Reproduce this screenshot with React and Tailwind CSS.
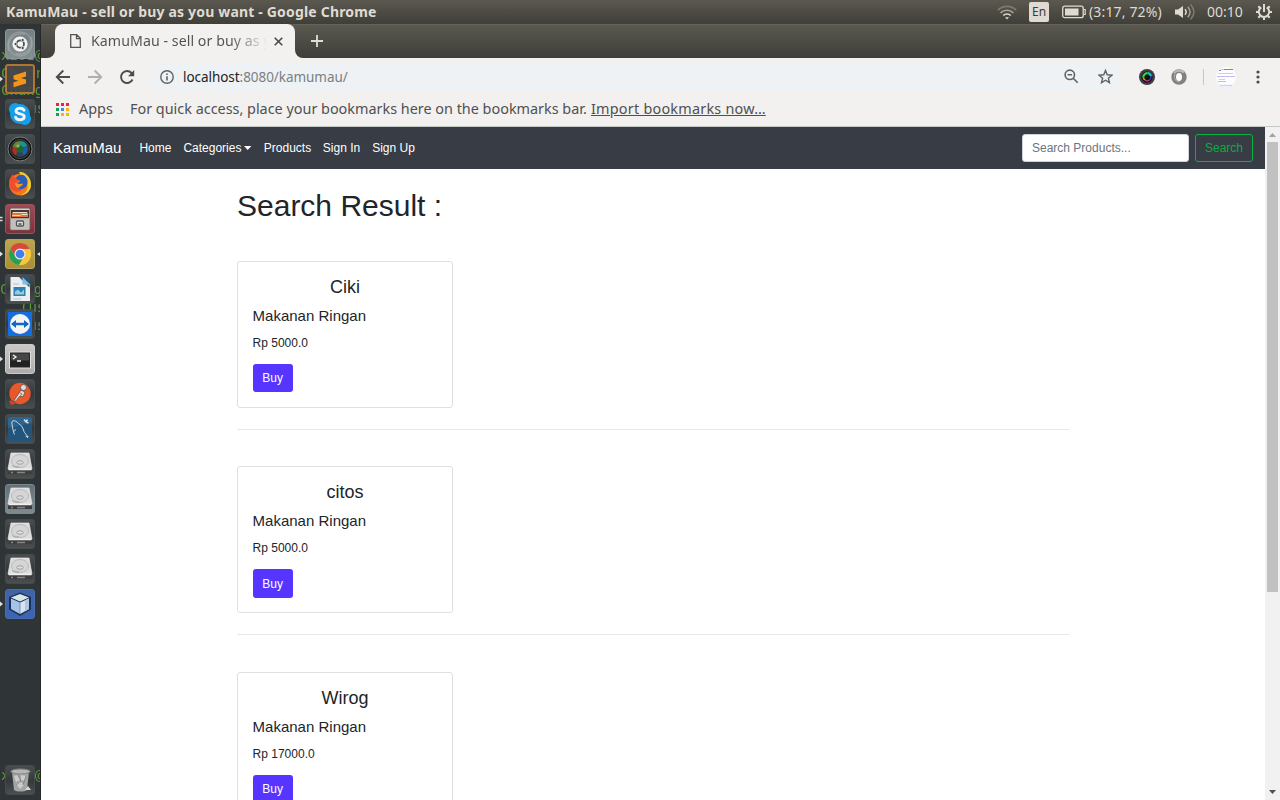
import React from "react";

const GHOST_LINES = [
  { y: 22, x: 1, t: "x201@" },
  { y: 40, x: 1, t: "Chror" },
  { y: 57, x: 1, t: "Chang" },
  { y: 75, x: 20, t: "Cus" },
  { y: 256, x: 0, t: "Chang" },
  { y: 274, x: 20, t: "(us" },
  { y: 292, x: 20, t: "Cus" },
  { y: 742, x: 1, t: "x201@" },
];

const S = ({ children }) => (
  <svg width="30" height="30" viewBox="0 0 30 30" className="block shrink-0">
    {children}
  </svg>
);

const Dash = () => (
  <S>
    <circle cx="15" cy="15" r="12" fill="none" stroke="#a9b3b6" strokeWidth="1.5" opacity=".5" />
    <path d="M4 22C1 10 10 3 20 5M26 8c3 11-5 19-15 17" stroke="#b8c1c3" strokeWidth="2" fill="none" opacity=".4" />
    <circle cx="15" cy="15" r="7.6" fill="#fff" />
    <circle cx="15.3" cy="15" r="3.7" fill="none" stroke="#474b4c" strokeWidth="1.7" />
    <g fill="#474b4c" stroke="#fff" strokeWidth=".8">
      <circle cx="10.6" cy="15" r="1.6" />
      <circle cx="17.7" cy="11" r="1.6" />
      <circle cx="17.7" cy="19" r="1.6" />
    </g>
  </S>
);
const Sublime = () => (
  <S>
    <rect x="1" y="1" width="28" height="28" rx="2" fill="#484848" stroke="#b97932" strokeWidth="2" />
    <path d="M8.500 11.500 21 7.500V12.500l-5 1.500 5 1.500v4L8.500 23.200v-5l5-1.500-5-1.500z" fill="#ff9a18" />
  </S>
);
const Skype = () => (
  <S>
    <g fill="#12a5f4">
      <circle cx="15" cy="15" r="10" />
      <circle cx="10.200" cy="10.200" r="6.2" />
      <circle cx="19.800" cy="19.800" r="6.2" />
    </g>
    <path d="M19 11.2c-1-1.8-2.4-2-4-2-2.200 0-4 1-4 2.800 0 4 8.200 1.700 8.200 5.600 0 2-1.800 3.200-4.200 3.200-2 0-3.700-.8-4.400-2.600" fill="none" stroke="#fff" strokeWidth="2.9" strokeLinecap="round" />
  </S>
);
const Lens = () => (
  <S>
    <circle cx="15" cy="15" r="12" fill="#111" stroke="#808080" strokeWidth="1" />
    <circle cx="15" cy="15" r="9.5" fill="#222" stroke="#4a4a4a" />
    <path d="M15 15V7a8 8 0 0 0-7.500 6z" fill="#6e8b30" />
    <path d="M15 15V7a8 8 0 0 1 7.500 5z" fill="#1b9a8e" />
    <path d="M15 15l7.500-3a8 8 0 0 1-4 10z" fill="#235fb0" />
    <path d="M15 15l3.500 7a8 8 0 0 1-8-.5z" fill="#254a55" />
    <path d="M15 15l-4.500 6.500a8 8 0 0 1-3-8.500z" fill="#b52d25" />
    <circle cx="15" cy="15" r="3.600" fill="#1d6a38" />
    <circle cx="13" cy="12" r="1.500" fill="#b7d6a0" opacity=".7" />
  </S>
);
const Firefox = () => (
  <S>
    <circle cx="15" cy="15.500" r="10.800" fill="#ff7b1c" />
    <path d="M14 3c7-1 13 7 12 14-1 6-6 9.500-11 9.500 6-2 9-7 7-12-1-4-5-5-8-11.500z" fill="#ffd12e" />
    <path d="M4 15c0-5 2-8 4-10l1 4c3-1 5 0 6 1l-4 4c-1 4 3 6 7 4-1 4-5 6-9 4-3-1-5-4-5-7z" fill="#f8502c" />
    <path d="M11 9c3-5 9-4 11 1 2 5-1 10-6 10-4 0-5-3-4-6l4-2c-2 0-3-1-5-3z" fill="#2c5fbd" />
    <path d="M10 14c2 0 3 1 5 1 2-.5 3-1 3 0-1 2-3 2-4 4-2 0-4-2-4-5z" fill="#ff9a20" />
  </S>
);
const Files = () => (
  <S>
    <rect x="5" y="4" width="20" height="22" rx="1.500" fill="#ddd9d2" stroke="#6e5d5a" />
    <rect x="6" y="6" width="18" height="8.500" fill="#4b3830" />
    <rect x="7" y="8.500" width="16" height="4.500" fill="#e8783a" />
    <path d="M8 8.500h14M7.500 11.500h8l1-1h6" stroke="#f6e6d4" />
    <path d="M6 14.500h18v11H6z" fill="#c9c8c4" />
    <rect x="11.500" y="17" width="7" height="5" rx="1" fill="#eee" stroke="#555" strokeWidth="1.300" />
    <path d="M13.500 20h3" stroke="#444" strokeWidth="1.500" />
  </S>
);
const Chrome = () => (
  <S>
    <circle cx="15" cy="15" r="11" fill="#ffcf3f" />
    <path d="M5.500 9.500A11 11 0 0 1 24.800 10H15l-4.300 7.500z" fill="#df4a3b" />
    <path d="M5.500 9.500A11 11 0 0 0 14 26l5.300-8.500h-8.600z" fill="#28a55b" />
    <path d="M24.800 10A11 11 0 0 1 14 26l5.300-8.500L20 12l-5-2z" fill="#ffcf3f" />
    <circle cx="15" cy="15" r="5.500" fill="#f3f3f3" />
    <circle cx="15" cy="15" r="4.300" fill="#4285f4" />
  </S>
);
const Writer = () => (
  <S>
    <path d="M5.500 3h12l7.500 7.500V27H5.500z" fill="#f5f8fa" />
    <path d="M14 3h10.500v10.500z" fill="#1e5b85" />
    <path d="M17.500 3v7.500H25z" fill="#8fc3e6" />
    <path d="M8 10h6M8 25h8" stroke="#b4cddd" />
    <rect x="8.500" y="13" width="12" height="9" fill="#2a86bb" />
    <path d="M10 20.500v-3l3-2 3 3 3-3v5z" fill="#9cd1e8" />
  </S>
);
const TeamViewer = () => (
  <S>
    <rect x="3" y="3" width="24" height="24" fill="#1471e8" />
    <circle cx="15" cy="15" r="10" fill="#fff" />
    <path d="M6 15l5-4v2.700h8V11l5 4-5 4v-2.700h-8V19z" fill="#126bce" />
  </S>
);
const Terminal = () => (
  <S>
    <rect x="4.500" y="8" width="21" height="16" fill="#222" stroke="#eceae7" />
    <rect x="6" y="9.500" width="18" height="7" fill="#484848" />
    <path d="M8 11l3 2-3 2M12 17h4" stroke="#fff" strokeWidth="1.300" fill="none" />
  </S>
);
const Postman = () => (
  <S>
    <circle cx="15" cy="14.500" r="10.700" fill="#f3592a" />
    <path d="M4 22l5-1 1 4-4 1z" fill="#dd4820" />
    <circle cx="18.500" cy="8.500" r="3" fill="#e8e7e4" stroke="#5a5450" strokeWidth=".8" />
    <path d="M16 11l4 2-2 5-3-1-4 5-3 1 4-6z" fill="#e6e2dc" stroke="#60524c" strokeWidth=".8" />
    <path d="M15 14l2 1-6 7" stroke="#f3592a" fill="none" />
  </S>
);
const Mysql = () => (
  <S>
    <rect x="3" y="3" width="24" height="24" rx="2" fill="#2f6794" />
    <path d="M3 14l24-5v18H3z" fill="#235680" />
    <path
      d="M9.500 20.500c-1-2-1.500-5-2-7.500C7 10 6 7.500 8 6.800c2-.5 4 1 5.500 2.700 3 1.500 4.500 4.500 5.500 8 .5 1.500 2.500 3 4 5.500l-2.500-1M8.500 17.500l2.500-2M22.500 24l.5-2"
      fill="none"
      stroke="#d5e1e9"
    />
    <path d="M19 5.500l2 2.500 2.500 1M21 8l1.500-2.500" stroke="#e0e6e9" strokeWidth="1.500" fill="none" />
  </S>
);
const Drive = () => (
  <S>
    <path d="M3 19h24v6H3z" fill="#3f3f3f" />
    <path d="M6 4h18l3 16H3z" fill="#e6e6e6" stroke="#f1f1f1" strokeWidth=".7" />
    <ellipse cx="15" cy="12" rx="8.500" ry="6.500" fill="#dedede" stroke="#c2c2c2" />
    <ellipse cx="15" cy="13.500" rx="3.300" ry="1.700" fill="#e9e9e9" stroke="#a5a5a5" />
    <path d="M7 16c1 2 4 2.500 7 1.800" stroke="#a5a5a5" fill="none" />
    <path d="M3.500 20.500h23" stroke="#fafafa" strokeWidth="1.500" />
    <path d="M6 23.500h2M12 23.500h8" stroke="#8a8a8a" strokeWidth="1.500" />
  </S>
);
const Box = () => (
  <S>
    <path d="M15 3.500 26 8v12.500L15 27 4 20.500V8z" fill="#1c3158" />
    <path d="M15 5 24 8.500 15 12.500 6 8.500z" fill="#e0f2f1" />
    <path d="M6 9.500l8.800 4V25L6 20z" fill="#accaf2" />
    <path d="M24 9.500l-8.800 4V25l8.800-5z" fill="#e1edfa" />
    <path d="M20 11.500l4-2V20l-4 2.500z" fill="#b5cfec" />
  </S>
);
const Trash = () => (
  <S>
    <path d="M7 7h17l-2 18c-3 2-10 2-13 0z" fill="#aaa" />
    <ellipse cx="15.500" cy="6.500" rx="9.500" ry="2.500" fill="#bdbdbd" stroke="#888" />
    <path d="M9 11l4-1 2 5-4 2zM16 10l5 1-1 5-4-1zM11 19l4-3 4 4-4 4z" fill="#d4d4d4" />
    <path d="M20 25l3-4 3 4z" fill="#e0e0e0" />
    <path d="M13 10l3 6-5 4M21 11l-3 9" stroke="#8c8c8c" fill="none" />
  </S>
);

const DARK = "bg-gradient-to-b from-[#4b5052] via-[#35393b] to-[#4d5152] border border-[#474c4d]";
const DOCK = [
  { icon: Dash, bg: "bg-gradient-to-b from-[#7a8487] to-[#879396] border border-[#929b9e]" },
  { icon: Sublime, bg: "bg-[#555]", left: "tri" },
  { icon: Skype, bg: DARK },
  { icon: Lens, bg: DARK },
  { icon: Firefox, bg: DARK },
  { icon: Files, bg: "bg-gradient-to-b from-[#a34e5a] to-[#85303c] border border-[#a3535e]", left: "two" },
  { icon: Chrome, bg: "bg-gradient-to-b from-[#c3ab50] to-[#b09536] border border-[#c1ad65]", left: "tri", right: true },
  { icon: Writer, bg: DARK },
  { icon: TeamViewer, bg: DARK },
  { icon: Terminal, bg: "bg-gradient-to-b from-[#d2d0cf] to-[#b4b3b2] border border-[#d4d2d1]", left: "tri" },
  { icon: Postman, bg: DARK },
  { icon: Mysql, bg: DARK },
  { icon: Drive, bg: DARK },
  { icon: Drive, bg: "bg-gradient-to-b from-[#66757b] to-[#829197] border border-[#7d8b90]" },
  { icon: Drive, bg: DARK },
  { icon: Drive, bg: DARK },
  { icon: Box, bg: "bg-gradient-to-b from-[#4166a9] to-[#3d68bc] border border-[#4a6fb4]", left: "tri" },
];

function Tile({ item }) {
  const Icon = item.icon;
  return (
    <div className="relative flex h-[30px] w-[41px] shrink-0">
      <div className="flex w-[5px] items-center">
        {item.left && (
          <svg width="4" height="8" viewBox="0 0 4 8">
            {item.left === "tri" ? (
              <path d="M0 1.500 3 4 0 6.500z" fill="#dedede" />
            ) : (
              <path d="M0 2.500h2.500M0 5.500h2.500" stroke="#ddd" strokeWidth="1.500" />
            )}
          </svg>
        )}
      </div>
      <div className={"flex h-[30px] w-[30px] items-center justify-center overflow-hidden rounded-[3px] opacity-95 " + item.bg}>
        <Icon />
      </div>
      <div className="flex w-[6px] items-center justify-end">
        {item.right && (
          <svg width="4" height="8" viewBox="0 0 4 8">
            <path d="M4 1.500 0 4l4 2.500z" fill="#e8e8e8" />
          </svg>
        )}
      </div>
    </div>
  );
}

function Dock() {
  return (
    <aside className="relative flex w-[41px] shrink-0 flex-col overflow-hidden border-r border-[#25282a] bg-[#2f3436] pt-[5px] pb-[5px]">
      {GHOST_LINES.map((g, i) => (
        <span
          key={i}
          className="absolute font-['DejaVu_Sans_Mono',monospace] text-[14px] leading-[18px] whitespace-pre text-[#6fc13b] opacity-70"
          style={{ top: g.y, left: g.x }}
        >
          {g.t}
        </span>
      ))}
      <div className="flex flex-col gap-[5px]">
        {DOCK.map((d, i) => (
          <Tile key={i} item={d} />
        ))}
      </div>
      <div className="mt-auto">
        <Tile item={{ icon: Trash, bg: DARK }} />
      </div>
    </aside>
  );
}

function TopBar() {
  return (
    <header className="flex h-6 shrink-0 items-center bg-gradient-to-b from-[#5b594f] to-[#3f3e39] pl-[6px] font-['Noto_Sans',sans-serif] text-[#dfdbd2]">
      <span className="-mt-[2px] w-[380px] text-[14px] font-bold tracking-[0.18px] whitespace-nowrap">
        KamuMau - sell or buy as you want - Google Chrome
      </span>
      <div className="ml-auto flex h-6 items-center">
        <svg width="20" height="16" viewBox="0 0 20 16" fill="none" strokeWidth="1.700">
          <path d="M.8 6.200a13 13 0 0 1 18.400 0" stroke="#7d7a70" />
          <path d="M3.600 8.900a9 9 0 0 1 12.800 0" stroke="#aaa69b" />
          <path d="M6.300 11.500a5.300 5.300 0 0 1 7.400 0" stroke="#dfdbd2" />
          <path d="M8 13.200h4L10 15.500z" fill="#dfdbd2" />
        </svg>
        <span className="ml-[12px] flex h-5 w-5 items-center justify-center rounded-[2px] bg-[#dfdbd2] text-[12px] text-[#3c3b37]">En</span>
        <svg className="ml-[13px]" width="24" height="14" viewBox="0 0 24 14">
          <rect x=".7" y="1.200" width="20.500" height="11.500" rx="2" fill="none" stroke="#dfdbd2" strokeWidth="1.300" />
          <rect x="3" y="3.500" width="13.500" height="7" fill="#dfdbd2" />
          <path d="M21.500 4.500h1.700v5h-1.700" fill="none" stroke="#dfdbd2" strokeWidth="1.200" />
        </svg>
        <span className="-mt-px ml-[3px] w-[74px] text-[14px] tracking-[0.15px] whitespace-nowrap">(3:17, 72%)</span>
        <svg className="ml-[12px]" width="20" height="18" viewBox="0 0 20 18" fill="none">
          <path d="M0 6.500h3L8 3v12l-5-3.500H0z" fill="#dfdbd2" />
          <path d="M10 6.300q2.300 2.700 0 5.400" stroke="#dfdbd2" strokeWidth="1.500" />
          <path d="M12.800 3.700q4.500 5.300 0 10.600" stroke="#a39f95" strokeWidth="1.500" />
          <path d="M15.500 1.500q7 7.500 0 15" stroke="#7d7a71" strokeWidth="1.500" />
        </svg>
        <span className="-mt-px ml-[12px] w-[36px] text-[14px] whitespace-nowrap">00:10</span>
        <svg className="mr-[8px] ml-[13px]" width="16" height="16" viewBox="0 0 16 16" fill="none" stroke="#dfdbd2" strokeWidth="2">
          <path d="M5.300 3.400a5.200 5.200 0 1 0 5.400 0" />
          <path d="M8 0v8M0 8h2.500M13.500 8H16M8 13.500V16M2.300 2.300l2 2M13.700 2.300l-2 2M2.300 13.700l2-2M13.700 13.700l-2-2" />
        </svg>
      </div>
    </header>
  );
}

function TabStrip() {
  return (
    <div className="flex h-[34px] shrink-0 items-stretch border-t border-[#65635a] bg-gradient-to-b from-[#595950] to-[#3f3e39]">
      <div className="flex w-[14px] items-end bg-[#f2f1f0]">
        <div className="h-full w-full rounded-br-[8px] bg-gradient-to-b from-[#595950] to-[#3f3e39]" />
      </div>
      <div className="-mt-px flex w-[240px] items-center rounded-t-[8px] bg-[#f2f1f0] pl-[15px]">
        <svg width="11" height="14" viewBox="0 0 11 14" fill="none" stroke="#555" strokeWidth="1.300">
          <path d="M.7.7h6L10.300 4.300v9H.7zM6.500.7v4h4" />
        </svg>
        <span className="-mt-px ml-[10px] w-[178px] overflow-hidden bg-gradient-to-r from-[#505050] from-[78%] to-[#f2f1f0] to-[99%] bg-clip-text font-['Noto_Sans',sans-serif] text-[14.2px] tracking-[0.05px] whitespace-nowrap text-transparent">
          KamuMau - sell or buy as you want
        </span>
        <svg className="mr-[12px] ml-[5px] shrink-0" width="9" height="9" viewBox="0 0 9 9" stroke="#4a4a4a" strokeWidth="1.600">
          <path d="M.7.7l7.600 7.600M8.300.7.7 8.300" />
        </svg>
      </div>
      <div className="w-[9px] bg-[#f2f1f0]">
        <div className="h-full w-full rounded-bl-[8px] bg-gradient-to-b from-[#595950] to-[#3f3e39]" />
      </div>
      <svg className="-mt-[2px] ml-[6px] self-center" width="14" height="14" viewBox="0 0 14 14" stroke="#deddd8" strokeWidth="1.800">
        <path d="M7 1v12M1 7h12" />
      </svg>
    </div>
  );
}

function Toolbar() {
  return (
    <div className="flex h-[38px] shrink-0 items-center bg-[#f2f1f0] pb-px pl-[14px]">
      <svg width="16" height="16" viewBox="0 0 16 16" fill="none" stroke="#4c4c4c" strokeWidth="1.900">
        <path d="M15 8H2M8.300 1.500 1.800 8l6.500 6.500" />
      </svg>
      <svg className="ml-[16px]" width="16" height="16" viewBox="0 0 16 16" fill="none" stroke="#b0afad" strokeWidth="1.900">
        <path d="M1 8h13M7.700 1.500 14.200 8l-6.500 6.500" />
      </svg>
      <svg className="ml-[16px]" width="16" height="16" viewBox="0 0 16 16" fill="none" stroke="#4c4c4c" strokeWidth="1.900">
        <path d="M13.500 10.500A6 6 0 1 1 12.500 4l1.500 1.700" />
        <path d="M15.200 1v6.200H9z" fill="#4c4c4c" stroke="none" />
      </svg>
      <div className="ml-[17px] flex h-7 w-[969px] items-center rounded-full bg-[#eef2f4] pl-[8px]">
        <svg width="14" height="14" viewBox="0 0 14 14" fill="none" stroke="#5f6368" strokeWidth="1.400">
          <circle cx="7" cy="7" r="6.200" />
          <path d="M7 6.200v4.200M7 3.500V5" strokeWidth="1.600" />
        </svg>
        <span className="mt-[2px] ml-[9px] font-['Noto_Sans',sans-serif] text-[13.500px] tracking-[-0.05px] whitespace-nowrap text-[#7b7f83]">
          <span className="text-[#222]">localhost</span>:8080/kamumau/
        </span>
        <svg className="ml-auto" width="15" height="15" viewBox="0 0 15 15" fill="none" stroke="#5f6368" strokeWidth="1.600">
          <circle cx="5.800" cy="5.800" r="4.700" />
          <path d="M9.200 9.200l4.500 4.500M3.500 5.800h4.600" />
        </svg>
        <svg className="mr-[8px] ml-[19px]" width="15" height="15" viewBox="0 0 24 24" fill="none" stroke="#5f6368" strokeWidth="2.300">
          <path d="M12 2.500l2.800 6.800 7.400.6-5.600 4.800 1.700 7.200L12 18l-6.300 3.900 1.700-7.200-5.600-4.800 7.400-.6z" />
        </svg>
      </div>
      <svg className="ml-[18px]" width="16" height="16" viewBox="0 0 16 16">
        <circle cx="8" cy="8" r="8" fill="#3e3e48" />
        <circle cx="8" cy="8" r="5.500" fill="#111" />
        <g fill="none" strokeWidth="2.200">
          <path d="M4.300 8.500A4 4 0 0 1 8.500 4.200" stroke="#2fdc3b" />
          <path d="M8.500 4.200A4 4 0 0 1 12 7" stroke="#18c9b8" />
          <path d="M12 7a4 4 0 0 1-1.500 4" stroke="#345ae8" strokeWidth="1" />
          <path d="M4.300 8.500A4 4 0 0 0 6 11" stroke="#d6a421" strokeWidth="1.500" />
          <path d="M6 11a4 4 0 0 0 4.500 0" stroke="#c43790" strokeWidth="1.200" />
        </g>
      </svg>
      <svg className="ml-[16px]" width="16" height="16" viewBox="0 0 16 16" fill="none">
        <circle cx="8" cy="8" r="7.700" fill="#818181" />
        <path d="M3 4a7 7 0 0 1 10-.5" stroke="#bababa" strokeWidth="2" />
        <ellipse cx="8" cy="8" rx="3" ry="4" fill="#fff" />
        <path d="M4 5c-2 4 1 8 5 8" stroke="#aaa" strokeWidth="1.200" />
      </svg>
      <div className="ml-[16px] h-4 w-px bg-[#c9c8c7]" />
      <svg className="ml-[12px]" width="20" height="20" viewBox="0 0 20 20">
        <circle cx="10" cy="10" r="10" fill="#fdfdff" />
        <path d="M3 3.500h2M8 2.500h9" stroke="#7187c0" />
        <path d="M5.500 2.500h2" stroke="#eba14b" />
        <path d="M2 6.500h15M3 12.500h6" stroke="#d0d0dc" />
        <path d="M1 9.500h18M2 14.500h8" stroke="#c6b9ee" />
        <path d="M4 18.500h12" stroke="#cdd4ff" strokeWidth="1.500" />
      </svg>
      <svg className="ml-[20px]" width="4" height="14" viewBox="0 0 4 14" fill="#4c4c4c">
        <circle cx="2" cy="2" r="1.600" />
        <circle cx="2" cy="7" r="1.600" />
        <circle cx="2" cy="12" r="1.600" />
      </svg>
    </div>
  );
}

const APP_COLORS = ["bg-[#ee2344]", "bg-[#ee2344]", "bg-[#ee2344]", "bg-[#0ba35b]", "bg-[#4285f4]", "bg-[#fbb40b]", "bg-[#0ba35b]", "bg-[#fbb40b]", "bg-[#fbb40b]"];

function Bookmarks() {
  return (
    <div className="flex h-[31px] shrink-0 items-center border-b border-[#c5c9c5] bg-[#f2f1f0] pb-[4px] pl-[15px] font-['Noto_Sans',sans-serif] text-[14.400px] whitespace-nowrap text-[#505050]">
      <div className="grid grid-cols-3 gap-[2px]">
        {APP_COLORS.map((c, i) => (
          <span key={i} className={"h-[3px] w-[3px] " + c} />
        ))}
      </div>
      <span className="ml-[10px] w-[51px]">Apps</span>
      <span className="w-[461px]">For quick access, place your bookmarks here on the bookmarks bar.</span>
      <span className="tracking-[0.23px] underline">Import bookmarks now…</span>
    </div>
  );
}

function NavBar() {
  return (
    <nav className="flex h-[42px] shrink-0 items-center bg-[#383c44] px-3 text-[12px] text-white">
      <span className="mr-[18px] text-[15px]">KamuMau</span>
      <div className="flex items-center gap-3">
        <span>Home</span>
        <span className="flex items-center">
          Categories
          <svg className="ml-[3px]" width="7.400" height="4" viewBox="0 0 7.400 4">
            <path d="M0 0h7.400L3.700 4z" fill="#fff" />
          </svg>
        </span>
        <span>Products</span>
        <span className="-ml-[0.400px]">Sign In</span>
        <span>Sign Up</span>
      </div>
      <input
        className="ml-auto h-7 w-[167px] rounded-[3px] border border-[#ced4da] bg-white px-[9px] text-[12px] placeholder:text-[#6c757d]"
        placeholder="Search Products..."
      />
      <button className="ml-[6px] h-7 w-[58px] rounded-[3px] border border-[#08b040] text-[12px] text-[#10a944]">Search</button>
    </nav>
  );
}

function Product({ name, price }) {
  return (
    <div className="h-[205.500px] shrink-0">
      <div className="flex h-[147px] w-[216px] flex-col items-start rounded-[3px] border border-[#dfdfdf] px-[14.600px] pt-[15px]">
        <h4 className="mb-[8.600px] w-full text-center text-[18px] leading-[21.600px]">{name}</h4>
        <h5 className="mb-[9px] text-[15px] leading-[18px]">Makanan Ringan</h5>
        <p className="mb-3 text-[12px] leading-[18px]">{price}</p>
        <button className="h-[28.400px] w-[40px] rounded-[3px] bg-[#5535ff] text-[12px] text-white">Buy</button>
      </div>
      <hr className="mt-[21px] w-[832px] border-[#e8e8e8]" />
    </div>
  );
}

function Scrollbar() {
  return (
    <div className="flex w-[15px] shrink-0 flex-col items-center bg-[#f1f1f1]">
      <svg width="15" height="15" viewBox="0 0 15 15">
        <path d="M4 10h7L7.500 6z" fill="#a3a3a3" />
      </svg>
      <div className="h-[450px] w-[11px] bg-[#c1c1c1]" />
      <svg className="mt-auto" width="15" height="15" viewBox="0 0 15 15">
        <path d="M4 5h7L7.500 9z" fill="#505050" />
      </svg>
    </div>
  );
}

export default function App() {
  return (
    <div className="flex h-[800px] w-[1280px] flex-col overflow-hidden bg-white">
      <TopBar />
      <div className="flex min-h-0 flex-1">
        <Dock />
        <div className="flex min-w-0 flex-1 flex-col">
          <TabStrip />
          <Toolbar />
          <Bookmarks />
          <div className="flex min-h-0 flex-1 font-['Liberation_Sans',Arial,sans-serif]">
            <div className="flex min-w-0 flex-1 flex-col overflow-hidden">
              <NavBar />
              <main className="flex flex-col pt-[19px] pl-[196px] text-[#212529]">
                <h2 className="mb-[36.700px] text-[30px] leading-[36px]">Search Result :</h2>
                <Product name="Ciki" price="Rp 5000.0" />
                <Product name="citos" price="Rp 5000.0" />
                <Product name="Wirog" price="Rp 17000.0" />
              </main>
            </div>
            <Scrollbar />
          </div>
        </div>
      </div>
    </div>
  );
}
